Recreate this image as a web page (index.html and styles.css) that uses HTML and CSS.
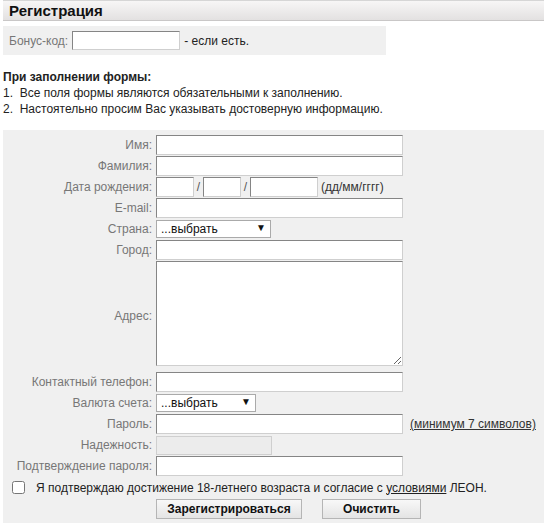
FILE: index.html
```html
<!DOCTYPE html>
<html lang="ru">
<head>
<meta charset="utf-8">
<title>Регистрация</title>
<link rel="stylesheet" href="styles.css">
</head>
<body>
<div class="page">
  <h1 class="header">Регистрация</h1>
  <div class="bonus">
    <span class="lbl">Бонус-код:</span>
    <input class="inp bonus-inp" type="text">
    <span class="note">- если есть.</span>
  </div>
  <div class="info">
    <p class="info-title">При заполнении формы:</p>
    <p>1.&nbsp;&nbsp;Все поля формы являются обязательными к заполнению.</p>
    <p>2.&nbsp;&nbsp;Настоятельно просим Вас указывать достоверную информацию.</p>
  </div>
  <form class="form">
    <label class="lbl">Имя:</label>
    <div class="field"><input class="inp wide" type="text"></div>

    <label class="lbl">Фамилия:</label>
    <div class="field"><input class="inp wide" type="text"></div>

    <label class="lbl">Дата рождения:</label>
    <div class="field date">
      <input class="inp dd" type="text"><span class="sl">/</span>
      <input class="inp mm" type="text"><span class="sl">/</span>
      <input class="inp yy" type="text"><span class="hint">(дд/мм/гггг)</span>
    </div>

    <label class="lbl">E-mail:</label>
    <div class="field"><input class="inp wide" type="text"></div>

    <label class="lbl">Страна:</label>
    <div class="field"><span class="sel country"><select><option>...выбрать</option></select><span class="arrow">▼</span></span></div>

    <label class="lbl">Город:</label>
    <div class="field"><input class="inp wide" type="text"></div>

    <label class="lbl lbl-area">Адрес:</label>
    <div class="field area"><textarea class="inp ta"></textarea></div>

    <label class="lbl">Контактный телефон:</label>
    <div class="field"><input class="inp wide" type="text"></div>

    <label class="lbl">Валюта счета:</label>
    <div class="field"><span class="sel currency"><select><option>...выбрать</option></select><span class="arrow">▼</span></span></div>

    <label class="lbl">Пароль:</label>
    <div class="field"><input class="inp wide" type="password"><a class="min" href="#">(минимум 7 символов)</a></div>

    <label class="lbl">Надежность:</label>
    <div class="field"><div class="strength"></div></div>

    <label class="lbl">Подтверждение пароля:</label>
    <div class="field"><input class="inp wide" type="password"></div>

    <div class="agree">
      <input class="chk" type="checkbox">
      <span>Я подтверждаю достижение 18-летнего возраста и согласие с <a href="#">условиями</a> ЛЕОН.</span>
    </div>

    <div class="buttons">
      <button class="btn reg" type="button">Зарегистрироваться</button>
      <button class="btn clr" type="reset">Очистить</button>
    </div>
  </form>
</div>
</body>
</html>
```
FILE: styles.css
```css
html, body {
  margin: 0;
  padding: 0;
  background: #fff;
}
body {
  font-family: "Liberation Sans", Arial, sans-serif;
  font-size: 12px;
  color: #222;
}
.page {
  padding-left: 3px;
  width: 560px;
}
.header {
  margin: 0;
  line-height: 19px;
  padding-left: 6px;
  font-size: 15px;
  font-weight: bold;
  color: #111;
  background: linear-gradient(#f7f6f6, #e3e1e1);
  border-top: 1px solid #d6d6d6;
  border-bottom: 1px solid #c9c7c7;
  box-sizing: border-box;
  height: 21px;
}
.bonus {
  margin-top: 5px;
  width: 383px;
  height: 29px;
  background: #f0f0f0;
  display: flex;
  align-items: center;
  padding-left: 6px;
  box-sizing: border-box;
}
.bonus .lbl {
  color: #777;
}
.inp {
  border-style: solid;
  border-width: 1px;
  border-color: #858585 #cfcfcf #cfcfcf #858585;
  background: #fff;
  box-sizing: border-box;
  height: 19px;
  padding: 0 2px;
  font-family: inherit;
  font-size: 12px;
  margin: 0;
}
.bonus-inp {
  width: 108px;
  height: 19px;
  margin: 0 4px;
}
.note {
  color: #222;
}
.info {
  margin-top: 14px;
}
.info p {
  margin: 0;
  line-height: 16px;
  color: #222;
}
.info .info-title {
  font-weight: bold;
  margin-bottom: 0;
}
.form {
  margin-top: 13px;
  background: #f0f0f0;
  padding: 5px 0 6px 0;
  display: grid;
  grid-template-columns: 149px 1fr;
  column-gap: 4px;
  row-gap: 1px;
  align-items: center;
}
.lbl {
  color: #777;
  text-align: right;
  line-height: 20px;
  white-space: nowrap;
}
.field {
  display: flex;
  align-items: center;
  height: 20px;
}
.wide {
  width: 247px;
  height: 20px;
}
.date .inp {
  height: 20px;
}
.dd, .mm {
  width: 38px;
}
.yy {
  width: 68px;
}
.sl {
  color: #555;
  width: 9px;
  text-align: center;
}
.hint {
  margin-left: 3px;
  color: #333;
}
.sel {
  position: relative;
  display: inline-block;
  height: 18px;
}
.sel select {
  appearance: none;
  -webkit-appearance: none;
  height: 18px;
  border: 1px solid #aaa;
  background: #fff;
  font-family: inherit;
  font-size: 12px;
  color: #111;
  padding: 0 0 0 4px;
  margin: 0;
  box-sizing: border-box;
  border-radius: 0;
}
.country select {
  width: 115px;
}
.currency select {
  width: 100px;
}
.arrow {
  position: absolute;
  right: 5px;
  top: 2px;
  font-size: 10px;
  color: #111;
  pointer-events: none;
}
.area {
  height: auto;
  padding-bottom: 5px;
}
.ta {
  width: 247px;
  height: 105px;
  display: block;
  resize: both;
}
.min {
  margin-left: 7px;
  color: #333;
  text-decoration: underline;
}
.strength {
  width: 116px;
  height: 19px;
  box-sizing: border-box;
  background: #ececec;
  border: 1px solid #cfcfcf;
}
.agree {
  grid-column: 1 / -1;
  display: flex;
  align-items: center;
  padding-left: 9px;
  height: 21px;
  color: #222;
}
.chk {
  margin: 0 11px 0 0;
  width: 13px;
  height: 13px;
}
.agree a {
  color: #222;
  text-decoration: underline;
}
.buttons {
  grid-column: 2;
  display: flex;
  gap: 20px;
}
.btn {
  height: 20px;
  border: 1px solid #b5b5b5;
  background: linear-gradient(#f8f8f8, #e4e4e4);
  font-family: inherit;
  font-size: 12px;
  font-weight: bold;
  color: #111;
  padding: 0;
  border-radius: 0;
}
.reg {
  width: 146px;
}
.clr {
  width: 99px;
}
```
